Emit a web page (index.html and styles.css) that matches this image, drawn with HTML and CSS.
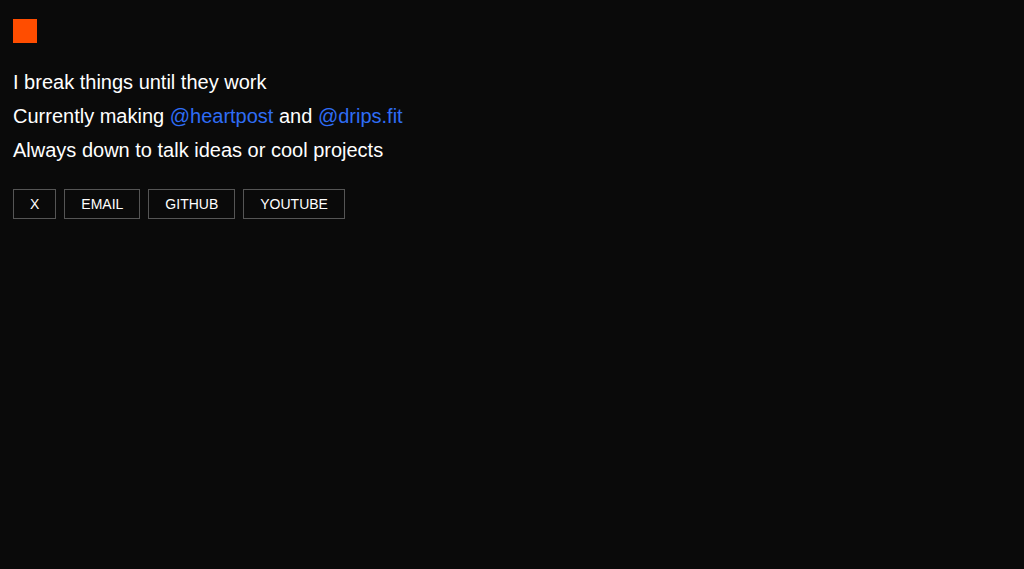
FILE: index.html
```html
<!DOCTYPE html>
<html lang="en">
<head>
<meta charset="utf-8">
<title>Home</title>
<link rel="stylesheet" href="styles.css">
</head>
<body>
<main class="page">
  <div class="logo"></div>
  <div class="intro">
    <p>I break things until they work</p>
    <p>Currently making <a href="#">@heartpost</a> and <a href="#">@drips.fit</a></p>
    <p>Always down to talk ideas or cool projects</p>
  </div>
  <nav class="links">
    <a class="btn" href="#">X</a>
    <a class="btn" href="#">EMAIL</a>
    <a class="btn" href="#">GITHUB</a>
    <a class="btn" href="#">YOUTUBE</a>
  </nav>
</main>
</body>
</html>
```
FILE: styles.css
```css
html, body {
  margin: 0;
  background: #0a0a0a;
  color: #ffffff;
  font-family: "Liberation Sans", Arial, sans-serif;
  height: 100%;
}
.page {
  padding: 19px 13px;
}
.logo {
  width: 24px;
  height: 24px;
  background: #ff4d00;
}
.intro {
  margin-top: 22px;
  font-size: 20px;
  line-height: 34px;
}
.intro p {
  margin: 0;
}
.intro a {
  color: #2f6df5;
  text-decoration: none;
}
.links {
  margin-top: 22px;
  display: flex;
  gap: 8px;
}
.btn {
  display: inline-block;
  border: 1px solid #555555;
  padding: 6px 16px;
  font-size: 14px;
  line-height: 16px;
  color: #ffffff;
  text-decoration: none;
}
```
